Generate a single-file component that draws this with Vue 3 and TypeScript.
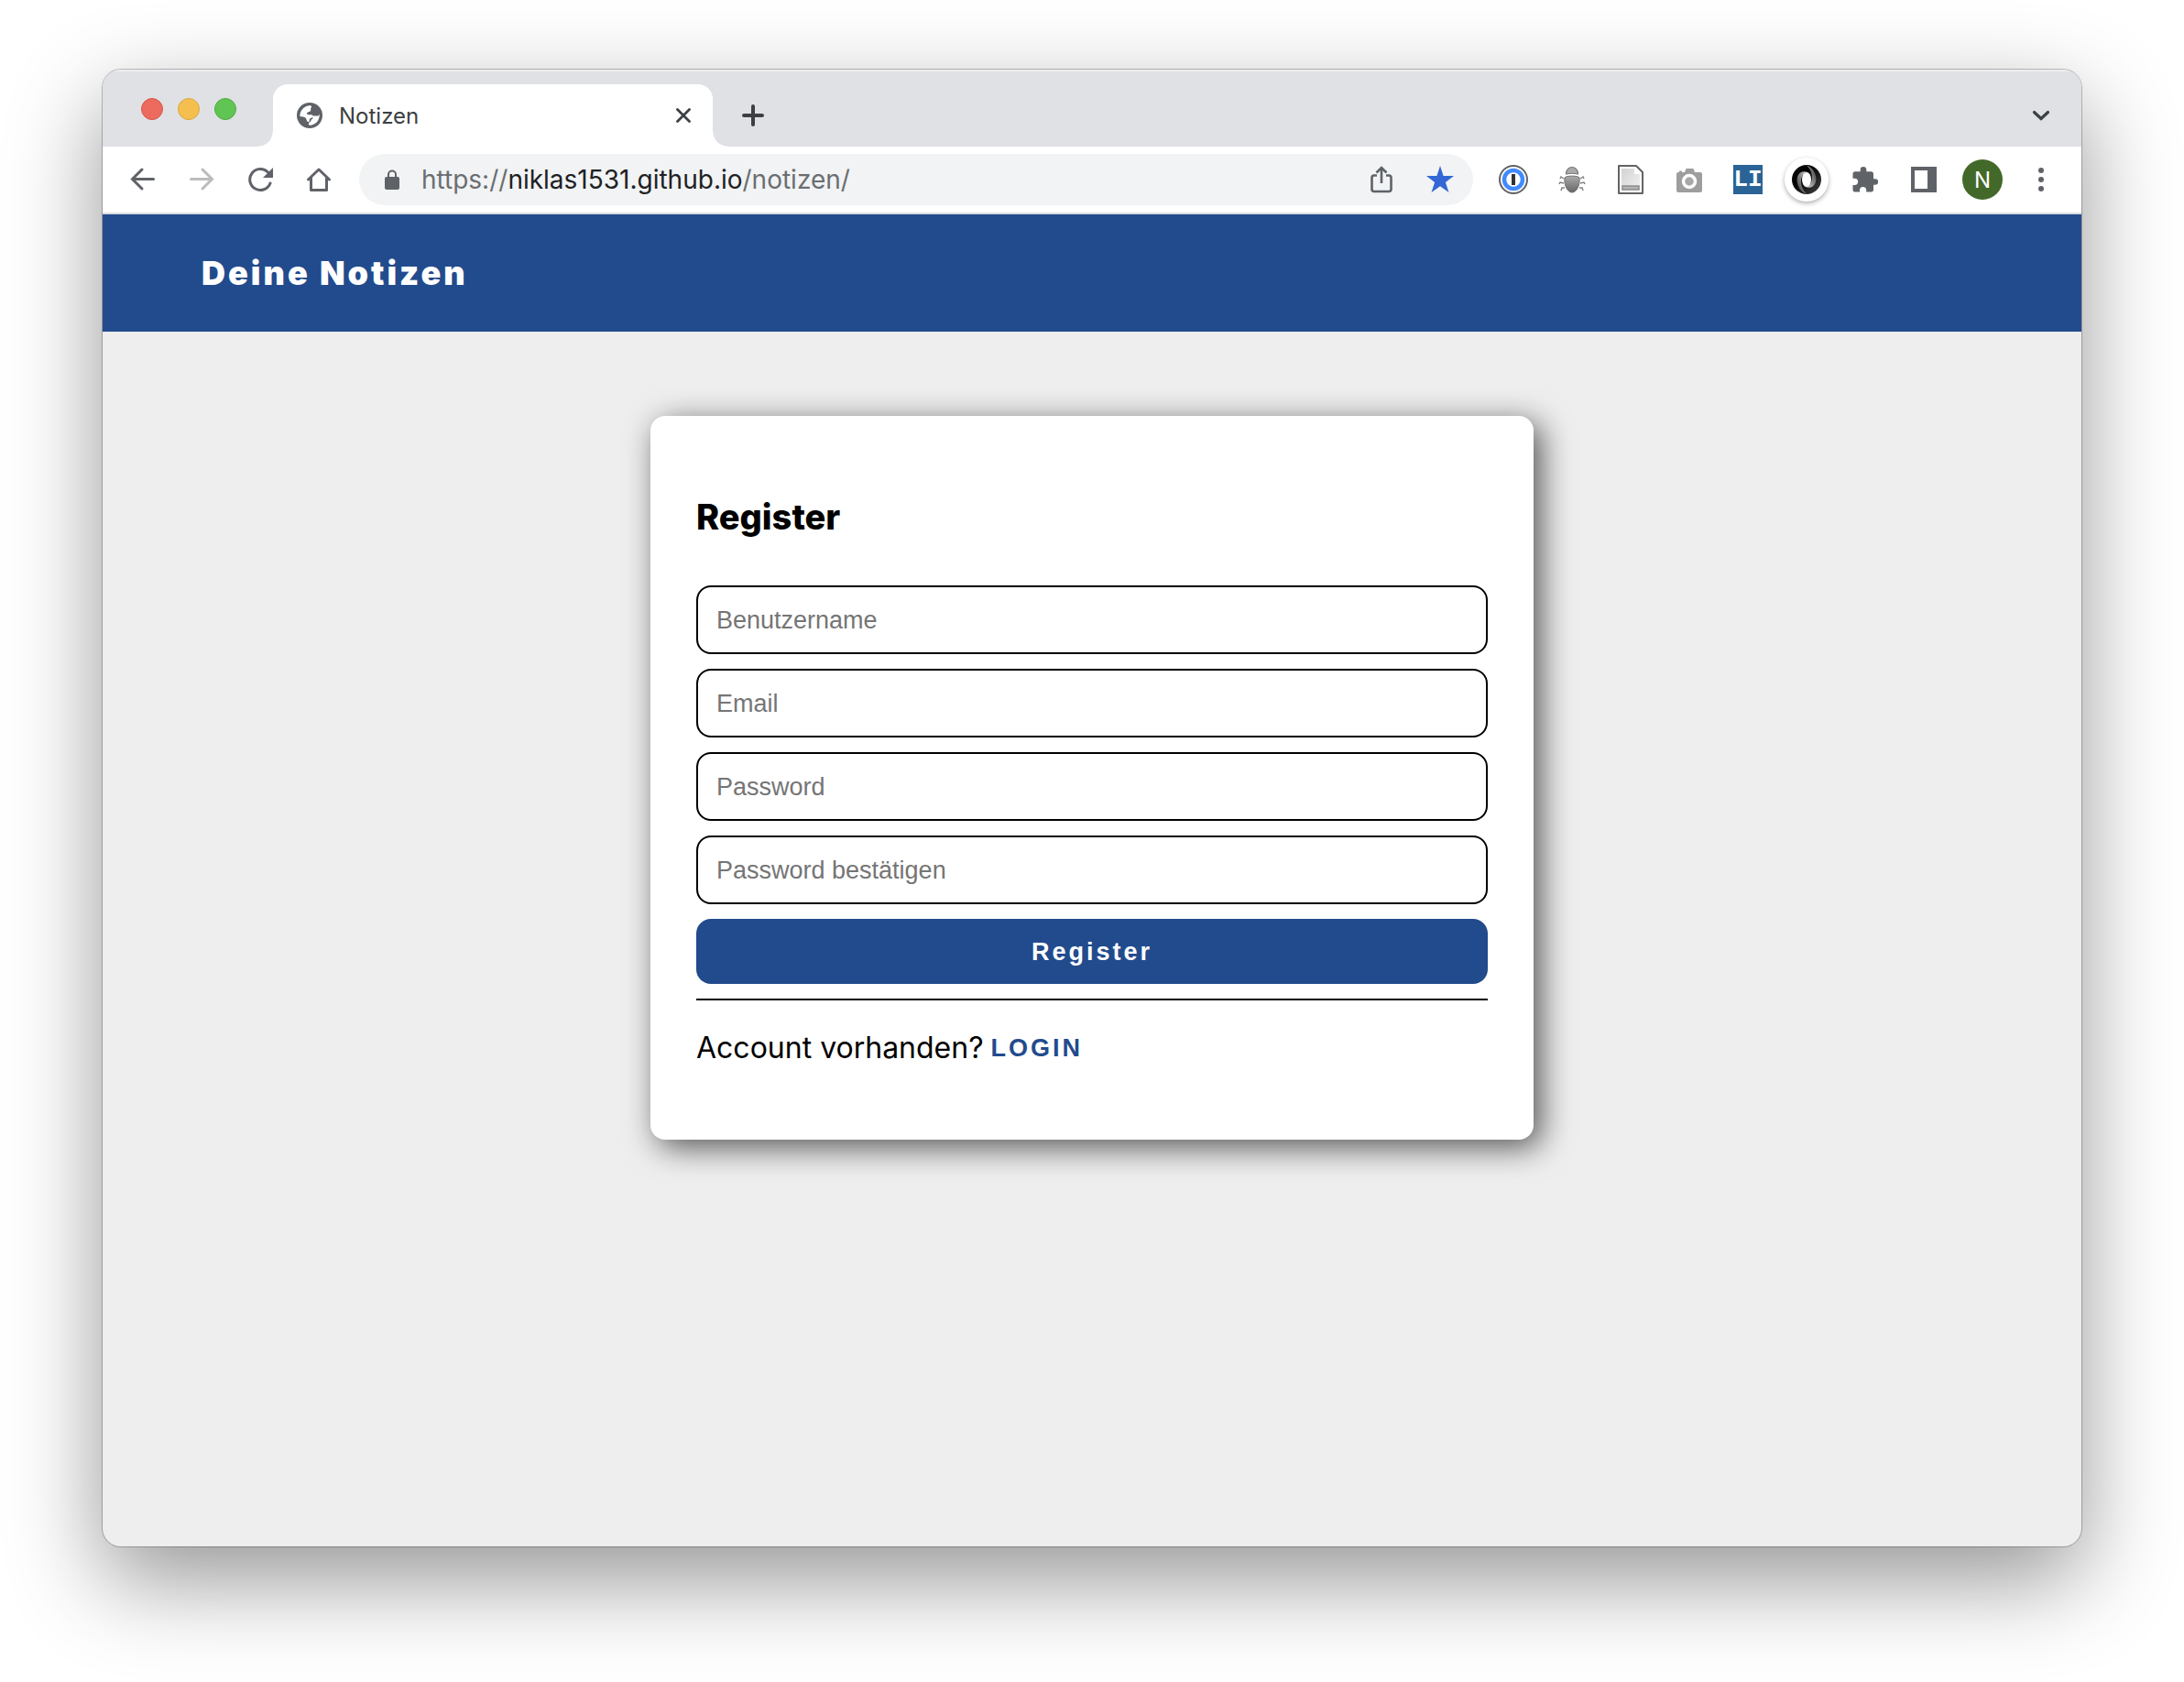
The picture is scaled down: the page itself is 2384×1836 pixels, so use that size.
<script setup lang="ts">
interface Field {
  id: string
  type: string
  label: string
}

const fields: Field[] = [
  { id: 'username', type: 'text', label: 'Benutzername' },
  { id: 'email', type: 'email', label: 'Email' },
  { id: 'password', type: 'password', label: 'Password' },
  { id: 'confirm', type: 'password', label: 'Password bestätigen' },
]
</script>

<template>
  <div class="desktop">
    <div class="window">
      <div class="tabstrip">
        <div class="lights">
          <button class="light red" aria-label="Schließen"></button>
          <button class="light yellow" aria-label="Minimieren"></button>
          <button class="light green" aria-label="Vollbild"></button>
        </div>
        <div class="tab">
          <svg class="globe" viewBox="0 0 28 28" width="28" height="28">
            <circle cx="14" cy="14" r="14" fill="#5f6368" />
            <path d="M3.400 13C4.500 7 9 3.500 14 3.200C16.500 3.300 16.500 4.500 15.500 5.500C14.500 7 16 8 14.800 9.300C13 10.800 11 10 11 12C12 14.500 17 11.800 17.500 14.500C18 17 14 16.500 13.800 18.500C14 20.500 13.500 21 12 21C10 18.500 11 17.500 8.500 16C6.500 15.200 4.500 15.500 3.400 15Z" fill="#fff" />
            <path d="M17 14.500H23.500L24.800 12.500C25 19 21 24.500 14 24.700C12.500 24.600 12.500 22 14 21.300C16.500 20.500 14.500 18.500 17.500 17.500Z" fill="#fff" />
          </svg>
          <span class="tab-title">Notizen</span>
          <button class="plain tab-close" aria-label="Tab schließen">
            <svg viewBox="0 0 16 16" width="16" height="16"><path d="M1.500 1.500L14.500 14.500M14.500 1.500L1.500 14.500" stroke="#3c4043" stroke-width="2.800" stroke-linecap="round" /></svg>
          </button>
        </div>
        <button class="plain new-tab" aria-label="Neuer Tab">
          <svg viewBox="0 0 24 24" width="24" height="24"><path d="M12 2V22M2 12H22" stroke="#3c4043" stroke-width="4" stroke-linecap="round" /></svg>
        </button>
        <button class="plain tab-search" aria-label="Tabs durchsuchen">
          <svg viewBox="0 0 20 12" width="20" height="12" fill="none"><path d="M2.500 2.500L10 9.500L17.500 2.500" stroke="#3c4043" stroke-width="3.200" stroke-linecap="round" /></svg>
        </button>
      </div>

      <div class="toolbar">
        <button class="plain tool" aria-label="Zurück">
          <svg viewBox="0 0 28 28" width="28" height="28" fill="none" stroke="#5f6368" stroke-width="3" stroke-linecap="round"><path d="M25.500 13.500H3M13 3L2.500 13.500L13 24" /></svg>
        </button>
        <button class="plain tool" aria-label="Vorwärts">
          <svg viewBox="0 0 28 28" width="28" height="28" fill="none" stroke="#babcbe" stroke-width="3" stroke-linecap="round"><path d="M2.500 13.500H25M15 3L25.500 13.500L15 24" /></svg>
        </button>
        <button class="plain tool" aria-label="Neu laden">
          <svg viewBox="0 0 28 28" width="28" height="28"><path d="M25 18A11.500 11.500 0 1 1 22.500 6" fill="none" stroke="#5f6368" stroke-width="3" stroke-linecap="round" /><path d="M28 1V12H17Z" fill="#5f6368" /></svg>
        </button>
        <button class="plain tool" aria-label="Startseite">
          <svg viewBox="0 0 28 28" width="28" height="28" fill="none" stroke="#5f6368" stroke-width="3" stroke-linecap="round" stroke-linejoin="round"><path d="M2.500 14L14 3L25.500 14M5.500 12V25.500H22.500V12" /></svg>
        </button>

        <div class="omnibox">
          <svg class="lock" viewBox="0 0 16 22" width="16" height="22"><path d="M4 9V5.500A4 4 0 0 1 12 5.500V9" fill="none" stroke="#5f6368" stroke-width="2" /><rect y="8" width="16" height="14" rx="2" fill="#5f6368" /></svg>
          <span class="url">https://<span class="host">niklas1531.github.io</span>/notizen/</span>
          <button class="plain share" aria-label="Teilen">
            <svg viewBox="0 0 24 30" width="24" height="30" fill="none" stroke="#5f6368" stroke-width="2.600"><path d="M7 10.500H4A2.500 2.500 0 0 0 1.500 13V25.500A2.500 2.500 0 0 0 4 28H20A2.500 2.500 0 0 0 22.500 25.500V13A2.500 2.500 0 0 0 20 10.500H17M12 19V3M6.500 7.500L12 2L17.500 7.500" /></svg>
          </button>
          <button class="plain" aria-label="Lesezeichen">
            <svg viewBox="0 0 30 30" width="30" height="30"><path d="M15 0L18.600 11H30L20.900 17.900L24.500 29L15 22.300L5.500 29L9.100 17.900L0 11H11.400Z" fill="#3367d6" /></svg>
          </button>
        </div>

        <div class="extensions">
          <button class="plain ext" aria-label="Passwortmanager">
            <svg viewBox="0 0 32 32" width="32" height="32"><circle cx="16" cy="16" r="15" fill="#fff" stroke="#636363" stroke-width="2" /><circle cx="16" cy="16" r="10" fill="#fff" stroke="#428bff" stroke-width="4.500" /><path d="M14 10H18V22H14Z" fill="#333" /></svg>
          </button>
          <button class="plain ext" aria-label="Debugger">
            <svg viewBox="0 0 32 32" width="32" height="32">
              <defs><linearGradient id="bug" x1="0" y1="0" x2="0" y2="1"><stop offset="0" stop-color="#aaa" /><stop offset="1" stop-color="#666" /></linearGradient></defs>
              <path d="M9.500 10C9.500 0 22.500 0 22.500 10Q16 8.500 9.500 10Z" fill="#aaa" stroke="#777" stroke-width="1.200" />
              <path d="M8 14C9 11.500 23 11.500 24 14C25 22 21 30 16 30C11 30 7 22 8 14Z" fill="url(#bug)" stroke="#707070" />
              <path d="M7 15L4 13L3 15M7 20L3 19L2 21M8 25L5 25L4 28M25 15L28 13L29 15M25 20L29 19L30 21M24 25L27 25L28 28" fill="none" stroke="#808080" stroke-width="1.500" />
            </svg>
          </button>
          <button class="plain ext" aria-label="Dokument">
            <svg viewBox="0 0 32 32" width="32" height="32">
              <defs><linearGradient id="doc" x1="0" y1="0" x2="1" y2="1"><stop offset="0" stop-color="#d2d2d2" /><stop offset="1" stop-color="#f2f2f2" /></linearGradient></defs>
              <path d="M3 1H22L29 8V31H3Z" fill="#fff" stroke="#636363" stroke-width="2" stroke-linejoin="round" /><path d="M6 4H20V10H26V28H6Z" fill="url(#doc)" /><rect x="7" y="23" width="18" height="4" fill="#b4b4b4" stroke="#8d8d8d" stroke-width="1.500" />
            </svg>
          </button>
          <button class="plain ext" aria-label="Screenshot">
            <svg viewBox="0 0 32 32" width="32" height="32"><path d="M4 8H5V6.500H8V8H11L12.500 4H20.500L22 8H28Q30 8 30 10V28Q30 30 28 30H4Q2 30 2 28V10Q2 8 4 8Z" fill="#9e9e9e" /><circle cx="16" cy="18" r="6.500" fill="#a8a8a8" stroke="#fff" stroke-width="3.500" /></svg>
          </button>
          <button class="plain ext li" aria-label="LI">LI</button>
          <button class="plain ext json" aria-label="JSON">
            <svg viewBox="0 0 32 32" width="32" height="32">
              <defs>
                <linearGradient id="ring" x1="0" y1="0" x2="1" y2="1"><stop offset="0" stop-color="#111" /><stop offset=".35" stop-color="#000" /><stop offset="1" stop-color="#444" /></linearGradient>
                <linearGradient id="swirlLeft" x1="0" y1="1" x2="1" y2="0"><stop offset="0" stop-color="#333" /><stop offset="1" stop-color="#d0d0d0" /></linearGradient>
                <linearGradient id="swirlRight" x1="0" y1="1" x2="1" y2="0"><stop offset="0" stop-color="#d8d8d8" /><stop offset="1" stop-color="#333" /></linearGradient>
              </defs>
              <circle cx="16" cy="16" r="16" fill="url(#ring)" />
              <path d="M17 8C9 5 4 12 6 20C7.500 26 11 30 16 31.500C10 26 8 17 12 11Q14 8 17 8Z" fill="url(#swirlLeft)" />
              <path d="M15 24C23 27 28 20 26 12C24.500 6 21 2 16 .5C22 6 24 15 20 21Q18 24 15 24Z" fill="url(#swirlRight)" />
              <ellipse cx="16" cy="16" rx="5" ry="8" fill="#fff" />
            </svg>
          </button>
          <button class="plain ext" aria-label="Erweiterungen">
            <svg viewBox="0 0 28 28" width="28" height="28"><path d="M25 13.300H23V8Q23 5.300 20.300 5.300H15.300V3.300A3.300 3.300 0 0 0 8.700 3.300V5.300H3Q.5 5.300 .5 8V12.700H2.500A3.500 3.500 0 0 1 2.500 19.900H.5V25Q.5 27.500 3 27.500H8V25.500A3.600 3.600 0 0 1 15.200 25.500V27.500H20.300Q23 27.500 23 25V19.700H25A3.200 3.200 0 0 0 25 13.300Z" fill="#5f6368" /></svg>
          </button>
          <button class="plain ext" aria-label="Seitenleiste">
            <svg viewBox="0 0 28 28" width="28" height="28"><path d="M0 0H28V28H0ZM4 4V24H18V4Z" fill="#5f6368" fill-rule="evenodd" /></svg>
          </button>
          <button class="plain ext avatar" aria-label="Profil">N</button>
          <button class="plain ext" aria-label="Menü">
            <svg viewBox="0 0 6 26" width="6" height="26" fill="#5f6368"><circle cx="3" cy="3" r="3" /><circle cx="3" cy="13" r="3" /><circle cx="3" cy="23" r="3" /></svg>
          </button>
        </div>
      </div>

      <header class="navbar">
        <h1 class="brand">Deine Notizen</h1>
      </header>

      <main class="page">
        <form class="card" @submit.prevent>
          <h2 class="card-title">Register</h2>
          <input v-for="f in fields" :id="f.id" :key="f.id" class="field" :type="f.type" :placeholder="f.label" :aria-label="f.label" />
          <button class="submit" type="submit">Register</button>
          <hr class="rule" />
          <p class="hint">Account vorhanden? <a class="login" href="#login">LOGIN</a></p>
        </form>
      </main>
    </div>
  </div>
</template>

<style>
body {
  margin: 0;
  background: #fff;
}
</style>

<style scoped>
.desktop {
  box-sizing: border-box;
  min-height: 100vh;
  padding: 76px 112px 148px;
  display: flex;
  overflow: hidden;
  font-family: Inter, "Noto Sans", sans-serif;
}
.window {
  flex: 1;
  min-width: 0;
  display: flex;
  flex-direction: column;
  overflow: hidden;
  border-radius: 20px;
  background: #eee;
  box-shadow: 0 0 0 1px rgba(0, 0, 0, 0.24), 0 36px 100px rgba(0, 0, 0, 0.42);
}
.plain {
  display: flex;
  align-items: center;
  justify-content: center;
  padding: 0;
  border: 0;
  background: none;
  font: inherit;
}
svg {
  display: block;
  flex: none;
}

.tabstrip {
  display: flex;
  align-items: flex-end;
  height: 84px;
  background: #dfe1e5;
  box-shadow: inset 0 2px 0 #eceef0;
}
.lights {
  display: flex;
  gap: 16px;
  width: 144px;
  height: 53px;
  padding-left: 42px;
}
.light {
  width: 24px;
  height: 24px;
  padding: 0;
  border: 1px solid #d5584d;
  border-radius: 50%;
  background: #ec6a5e;
}
.light.yellow {
  border-color: #dca63c;
  background: #f5bf4f;
}
.light.green {
  border-color: #4fab3c;
  background: #61c554;
}
.tab {
  position: relative;
  box-sizing: border-box;
  display: flex;
  align-items: center;
  width: 480px;
  height: 68px;
  padding: 0 24px 0 26px;
  border-radius: 16px 16px 0 0;
  background: #fff;
}
.tab::before,
.tab::after {
  content: "";
  position: absolute;
  bottom: 0;
  width: 16px;
  height: 16px;
}
.tab::before {
  right: 100%;
  background: radial-gradient(circle at 0 0, transparent 15px, #fff 16px);
}
.tab::after {
  left: 100%;
  background: radial-gradient(circle at 100% 0, transparent 15px, #fff 16px);
}
.tab-title {
  flex: 1;
  margin-left: 18px;
  color: #3c4043;
  font-size: 24px;
}
.new-tab {
  width: 88px;
  height: 68px;
}
.tab-search {
  width: 88px;
  height: 68px;
  margin-left: auto;
}

.toolbar {
  display: flex;
  align-items: center;
  height: 72px;
  padding-left: 12px;
  border-bottom: 2px solid #dadce0;
  background: #fff;
}
.tool {
  width: 64px;
  height: 56px;
}
.omnibox {
  box-sizing: border-box;
  flex: 1;
  min-width: 0;
  display: flex;
  align-items: center;
  height: 56px;
  margin: 0 12px;
  padding: 0 21px 0 28px;
  border-radius: 28px;
  background: #f1f3f4;
}
.url {
  flex: 1;
  margin-left: 24px;
  color: #6b6e71;
  font-size: 28px;
  white-space: nowrap;
}
.host {
  color: #202124;
}
.share {
  margin-right: 37px;
}
.extensions {
  display: flex;
  align-items: center;
  padding-right: 12px;
}
.ext {
  width: 64px;
  height: 56px;
}
.li {
  width: 32px;
  height: 32px;
  margin: 0 16px;
  background: #2a6496;
  color: #fff;
  font: bold 26px/32px "Liberation Mono", monospace;
}
.json {
  width: 48px;
  height: 48px;
  margin: 0 8px;
  border-radius: 50%;
  box-shadow: 0 2px 5px rgba(0, 0, 0, 0.32);
}
.avatar {
  width: 44px;
  height: 44px;
  margin: 0 10px;
  border-radius: 50%;
  background: #43692a;
  color: #fff;
  font-size: 24px;
}

.navbar {
  display: flex;
  align-items: center;
  height: 128px;
  padding: 0 5%;
  background: #224b8d;
}
.brand {
  margin: 0;
  color: #fff;
  font-size: 36px;
  font-weight: 900;
  line-height: 44px;
  letter-spacing: 3px;
}
.page {
  flex: 1;
  padding: 92px 0;
}
.card {
  width: 40%;
  margin: 0 auto;
  padding: 86px 50px 80px;
  display: flex;
  flex-direction: column;
  gap: 16px;
  border-radius: 16px;
  background: #fff;
  box-shadow: 8px 8px 34px rgba(0, 0, 0, 0.65);
}
.card-title {
  margin: 0 0 35px;
  color: #000;
  font-size: 38px;
  font-weight: 800;
  line-height: 48px;
}
.field {
  box-sizing: border-box;
  height: 75px;
  padding: 2px 20px 0;
  border: 2px solid #000;
  border-radius: 16px;
  outline: 0;
  background: #fff;
  font: 27px "Liberation Sans", sans-serif;
}
.field::placeholder {
  color: #757575;
  opacity: 1;
}
.submit {
  height: 71px;
  padding: 2px 0 0;
  border: 0;
  border-radius: 16px;
  background: #224b8d;
  color: #fff;
  font: bold 27px "Liberation Sans", sans-serif;
  letter-spacing: 3px;
}
.rule {
  width: 100%;
  height: 2px;
  margin: 0;
  border: 0;
  background: #000;
}
.hint {
  display: flex;
  align-items: center;
  gap: 8px;
  margin: 16px 0 0;
  color: #000;
  font-size: 32px;
  line-height: 40px;
}
.login {
  color: #224b8d;
  font: bold 27px "Liberation Sans", sans-serif;
  letter-spacing: 3px;
  text-decoration: none;
}
</style>
